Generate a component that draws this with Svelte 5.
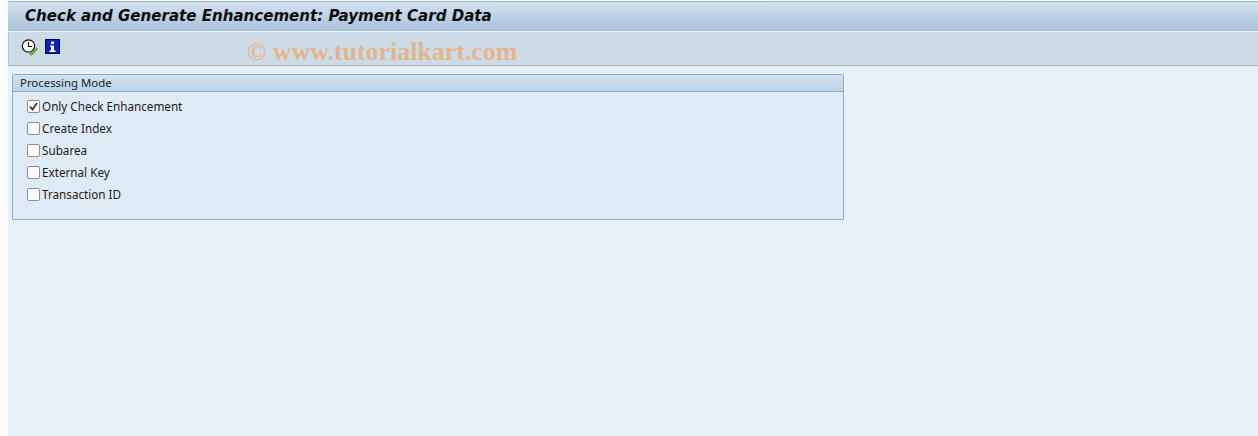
<script>
  const options = [
    { label: 'Only Check Enhancement', checked: true },
    { label: 'Create Index', checked: false },
    { label: 'Subarea', checked: false },
    { label: 'External Key', checked: false },
    { label: 'Transaction ID', checked: false },
  ];
</script>

<div class="page">
  <header class="titlebar">
    <h1>Check and Generate Enhancement: Payment Card Data</h1>
  </header>

  <div class="toolbar">
    <button class="tool" aria-label="Execute in background">
      <svg width="18" height="18" viewBox="0 0 18 18">
        <circle cx="7.5" cy="7" r="6.2" fill="#f8f8f4" stroke="#111" stroke-width="1.2" />
        <path d="M7.5 3V7.5H11" fill="none" stroke="#111" stroke-width="1.1" />
        <path d="M7.5 12.5L10.5 15.5L16.5 9" fill="none" stroke="#6aa52e" stroke-width="2.2" />
      </svg>
    </button>
    <button class="tool info" aria-label="Information">
      <svg width="15" height="15" viewBox="0 0 15 15">
        <rect x="0" y="0" width="15" height="15" fill="#0c1fc4" />
        <rect x="0.5" y="0.5" width="14" height="14" fill="none" stroke="#050a40" />
        <path d="M6 2.5H9V5H6ZM5 6.5H9V11.5H10.5V13H4.5V11.5H6V8H5Z" fill="#fff" />
      </svg>
    </button>
    <span class="watermark">© www.tutorialkart.com</span>
  </div>

  <main class="content">
    <section class="group">
      <div class="group-title">Processing Mode</div>
      <div class="group-body">
        {#each options as option}
          <div class="row">
            <span class="check">
              {#if option.checked}
                <svg width="9" height="9" viewBox="0 0 9 9">
                  <path d="M1 4.5L3.5 7.5L8 1" fill="none" stroke="#333" stroke-width="1.7" />
                </svg>
              {/if}
            </span>
            <span class="label">{option.label}</span>
          </div>
        {/each}
      </div>
    </section>
  </main>
</div>

<style>
  :global(body) {
    margin: 0;
    background: #fbfcfe;
  }

  .page {
    display: flex;
    flex-direction: column;
    height: 436px;
    margin-left: 8px;
    padding-top: 1px;
    box-sizing: border-box;
    font-family: "Noto Sans", "DejaVu Sans", sans-serif;
    overflow: hidden;
  }

  .titlebar {
    height: 31px;
    box-sizing: border-box;
    border-top: 1px solid #9fb3cc;
    border-bottom: 1px solid #eef4fa;
    background: linear-gradient(#d3e2ef, #a9c2dc);
    padding: 0 0 2px 17px;
    display: flex;
    align-items: center;
  }

  h1 {
    margin: 0;
    font-family: "DejaVu Sans", sans-serif;
    font-size: 15.05px;
    font-weight: 700;
    font-style: italic;
    color: #0c0c0c;
  }

  .toolbar {
    height: 34px;
    box-sizing: border-box;
    background: #cddbe7;
    border-left: 1px solid #b5c4d2;
    border-bottom: 1px solid #a5b4c0;
    display: flex;
    align-items: flex-start;
    padding: 7px 0 0 12px;
    position: relative;
  }

  .tool {
    border: 0;
    background: none;
    padding: 0;
    width: 18px;
    height: 18px;
    display: block;
  }

  .tool.info {
    width: 15px;
    height: 15px;
    margin-left: 6px;
  }

  .watermark {
    position: absolute;
    left: 238px;
    top: 5px;
    font-family: "Liberation Serif", serif;
    font-size: 25.9px;
    font-weight: 700;
    color: #e2b58a;
    white-space: nowrap;
  }

  .content {
    flex: 1;
    background: #e8f0f8;
    padding: 8px 0 0 4px;
  }

  .group {
    width: 832px;
    height: 146px;
    box-sizing: border-box;
    border: 1px solid #8fa9c4;
    border-radius: 2px 2px 0 0;
    background: #deeaf4;
    display: flex;
    flex-direction: column;
  }

  .group-title {
    height: 17px;
    box-sizing: border-box;
    border-bottom: 1px solid #8fabc9;
    background: linear-gradient(#d4e3f2, #bcd3e9);
    padding-left: 7px;
    font-size: 11.4px;
    line-height: 15px;
    color: #1c1c1c;
  }

  .group-body {
    display: flex;
    flex-direction: column;
    padding: 3px 0 0 14px;
  }

  .row {
    height: 22px;
    display: flex;
    align-items: center;
    gap: 2px;
  }

  .check {
    width: 11px;
    height: 11px;
    border: 1px solid #8a8f96;
    border-radius: 2px;
    background: #fbfbfb;
    display: flex;
    align-items: center;
    justify-content: center;
  }

  .label {
    font-size: 11.7px;
    color: #1c1c1c;
    white-space: nowrap;
  }
</style>
